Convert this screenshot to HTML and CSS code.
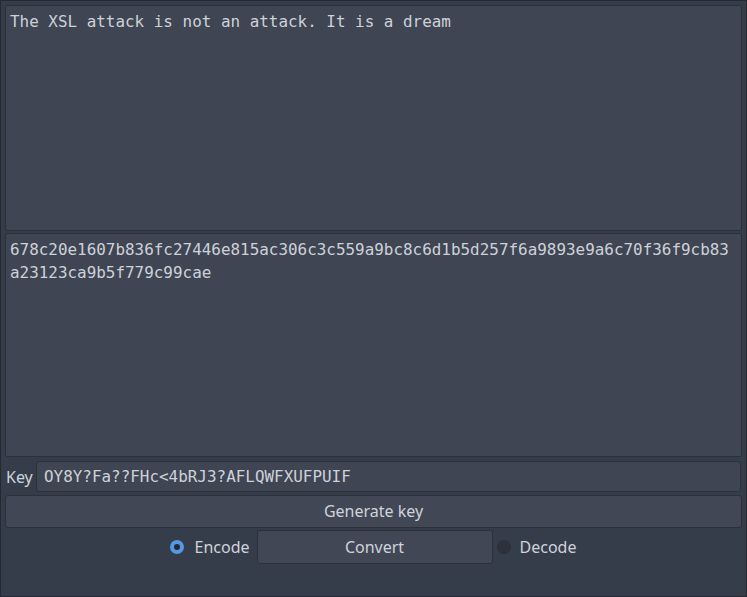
FILE: index.html
```html
<!DOCTYPE html>
<html>
<head>
<meta charset="utf-8">
<link rel="stylesheet" href="styles.css">
</head>
<body>
<div class="window">
  <div class="textbox tb1">The XSL attack is not an attack. It is a dream</div>
  <div class="textbox tb2">678c20e1607b836fc27446e815ac306c3c559a9bc8c6d1b5d257f6a9893e9a6c70f36f9cb83 a23123ca9b5f779c99cae</div>
  <div class="keyrow">
    <span class="label">Key</span>
    <div class="lineedit">OY8Y?Fa??FHc&lt;4bRJ3?AFLQWFXUFPUIF</div>
  </div>
  <div class="button genbtn">Generate key</div>
  <div class="bottomrow">
    <div class="radio checked encode"><span class="dot"></span><span class="rlabel">Encode</span></div>
    <div class="button convert">Convert</div>
    <div class="radio decode"><span class="dot"></span><span class="rlabel">Decode</span></div>
  </div>
</div>
</body>
</html>
```

FILE: styles.css
```css
html, body {
  margin: 0;
  padding: 0;
  background: #363d4a;
}
.window {
  box-sizing: border-box;
  width: 747px;
  height: 597px;
  border: 1px solid #252a32;
  padding: 4px 5px 4px 4px;
  display: flex;
  flex-direction: column;
  background: #363d4a;
  font-family: "Noto Sans", sans-serif;
  color: #cfd3da;
}
.textbox {
  box-sizing: border-box;
  background: #3f4553;
  border: 1px solid #2b3039;
  border-radius: 2px;
  font-family: "DejaVu Sans Mono", monospace;
  font-size: 15.93px;
  line-height: 23px;
  padding: 4px 4px 0 4px;
  color: #cdd1d8;
  word-break: break-all;
  width: 737px;
}
.tb1 { height: 226px; }
.tb2 { height: 224px; margin-top: 2px; padding-top: 4px; }
.keyrow {
  display: flex;
  align-items: center;
  margin-top: 4px;
  height: 31px;
}
.label {
  font-size: 16px;
  width: 30px;
  padding-left: 1px;
}
.lineedit {
  box-sizing: border-box;
  flex: 1;
  height: 31px;
  background: #3f4553;
  border: 1px solid #2b3039;
  border-radius: 3px;
  font-family: "DejaVu Sans Mono", monospace;
  font-size: 15.93px;
  line-height: 29px;
  padding-left: 7px;
  color: #cdd1d8;
}
.button {
  box-sizing: border-box;
  background: #414755;
  border: 1px solid #2b3039;
  border-radius: 3px;
  font-size: 16px;
  text-align: center;
  color: #cfd3da;
}
.genbtn {
  margin-top: 3px;
  height: 33px;
  line-height: 31px;
  width: 737px;
}
.bottomrow {
  margin-top: 2px;
  height: 34px;
  display: flex;
  justify-content: center;
  align-items: center;
}
.convert {
  width: 236px;
  height: 34px;
  line-height: 32px;
  margin-left: 7px;
  margin-right: 4px;
}
.radio {
  display: flex;
  align-items: center;
  font-size: 16px;
}
.dot {
  box-sizing: border-box;
  width: 14px;
  height: 14px;
  border-radius: 50%;
  background: #2c313b;
  border: 1px solid #2a2f38;
  margin-right: 11px;
}
.decode .dot {
  margin-right: 9px;
}
.radio.checked .dot {
  background: #232831;
  border: 4px solid #5498e4;
}
```
